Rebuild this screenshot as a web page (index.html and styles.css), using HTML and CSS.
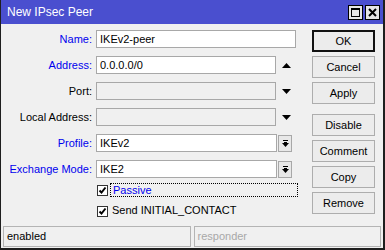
FILE: index.html
```html
<!DOCTYPE html>
<html lang="en">
<head>
  <meta charset="UTF-8" />
  <title>New IPsec Peer</title>
  <link rel="stylesheet" href="styles.css">
</head>
<body>
  <div class="window">
    <div class="titlebar">
      <span class="title">New IPsec Peer</span>
      <div class="win-btns">
        <span class="win-btn"><svg width="9" height="9" viewBox="0 0 9 9"><rect x="0.5" y="0.5" width="8" height="8" fill="none" stroke="#000"/><rect x="0" y="0" width="9" height="2" fill="#000"/></svg></span>
        <span class="win-btn"><svg width="9" height="9" viewBox="0 0 9 9"><path d="M1 1 L8 8 M8 1 L1 8" stroke="#000" stroke-width="2"/></svg></span>
      </div>
    </div>

    <div class="content">
      <div class="form">
        <div class="row">
          <label class="lbl blue">Name:</label>
          <div class="field full"><span class="input">IKEv2-peer</span></div>
        </div>
        <div class="row">
          <label class="lbl blue">Address:</label>
          <div class="field">
            <span class="input">0.0.0.0/0</span>
            <span class="arrow"><svg width="9" height="5" viewBox="0 0 9 5"><polygon points="0,5 9,5 4.5,0" fill="#000"/></svg></span>
          </div>
        </div>
        <div class="row">
          <label class="lbl">Port:</label>
          <div class="field">
            <span class="input disabled"></span>
            <span class="arrow"><svg width="9" height="5" viewBox="0 0 9 5"><polygon points="0,0 9,0 4.5,5" fill="#000"/></svg></span>
          </div>
        </div>
        <div class="row">
          <label class="lbl">Local Address:</label>
          <div class="field">
            <span class="input disabled"></span>
            <span class="arrow"><svg width="9" height="5" viewBox="0 0 9 5"><polygon points="0,0 9,0 4.5,5" fill="#000"/></svg></span>
          </div>
        </div>
        <div class="row">
          <label class="lbl blue">Profile:</label>
          <div class="field">
            <span class="input">IKEv2</span>
            <span class="drop"><svg width="7" height="7" viewBox="0 0 7 7"><rect x="1" y="0" width="5" height="1" fill="#000"/><polygon points="2,2 5,2 5,3 7,3 3.5,7 0,3 2,3" fill="#000"/></svg></span>
          </div>
        </div>
        <div class="row">
          <label class="lbl blue">Exchange Mode:</label>
          <div class="field">
            <span class="input">IKE2</span>
            <span class="drop"><svg width="7" height="7" viewBox="0 0 7 7"><rect x="1" y="0" width="5" height="1" fill="#000"/><polygon points="2,2 5,2 5,3 7,3 3.5,7 0,3 2,3" fill="#000"/></svg></span>
          </div>
        </div>

        <div class="check-row first">
          <span class="box"><svg width="9" height="9" viewBox="0 0 9 9"><path d="M1.5 4.5 L3.5 6.5 L7.5 1.5" fill="none" stroke="#000" stroke-width="2"/></svg></span>
          <span class="check-label focus blue">Passive</span>
        </div>
        <div class="check-row">
          <span class="box"><svg width="9" height="9" viewBox="0 0 9 9"><path d="M1.5 4.5 L3.5 6.5 L7.5 1.5" fill="none" stroke="#000" stroke-width="2"/></svg></span>
          <span class="check-label">Send INITIAL_CONTACT</span>
        </div>
      </div>

      <div class="buttons">
        <button class="btn default">OK</button>
        <button class="btn">Cancel</button>
        <button class="btn">Apply</button>
        <button class="btn spaced">Disable</button>
        <button class="btn">Comment</button>
        <button class="btn">Copy</button>
        <button class="btn">Remove</button>
      </div>
    </div>

    <div class="statusbar">
      <span class="status">enabled</span>
      <span class="status muted">responder</span>
    </div>
  </div>
</body>
</html>
```

FILE: styles.css
```css
body {
  margin: 0;
  font-family: "Liberation Sans", Arial, sans-serif;
  font-size: 11px;
  color: #000;
  background: #f0f0f0;
}
.window {
  width: 385px;
  height: 250px;
  box-sizing: border-box;
  border-left: 1px solid #1e1e1e;
  border-right: 2px solid #1e1e1e;
  border-bottom: 2px solid #1e1e1e;
  background: #f0f0f0;
  display: flex;
  flex-direction: column;
}
.titlebar {
  height: 24px;
  background: #4a4fcf;
  display: flex;
  align-items: center;
  justify-content: space-between;
  padding: 0 3px 0 6px;
}
.title {
  color: #fff;
  font-size: 12px;
}
.win-btns {
  display: flex;
  gap: 2px;
}
.win-btn {
  width: 13px;
  height: 13px;
  border: 1px solid #000;
  background: #e6e6e6;
  display: flex;
  align-items: center;
  justify-content: center;
}
.content {
  display: flex;
  padding-top: 6px;
  height: 195px;
}
.form {
  width: 311px;
  display: flex;
  flex-direction: column;
}
.row {
  display: flex;
  align-items: center;
  height: 18px;
  margin-bottom: 8px;
}
.lbl {
  width: 91px;
  text-align: right;
  padding-right: 4px;
}
.blue {
  color: #0000ee;
}
.field {
  display: flex;
  align-items: center;
  width: 200px;
}
.input {
  box-sizing: border-box;
  height: 18px;
  width: 181px;
  border: 1px solid #a8a8a8;
  background: #fff;
  padding: 1px 3px 0;
  line-height: 15px;
}
.field.full .input {
  width: 200px;
}
.input.disabled {
  background: #f0f0f0;
}
.arrow {
  width: 19px;
  display: flex;
  justify-content: center;
  padding-left: 1px;
}
.drop {
  box-sizing: border-box;
  width: 14px;
  height: 17px;
  margin-left: 1px;
  border: 1px solid #a8a8a8;
  background: #e8e8e8;
  display: flex;
  align-items: center;
  justify-content: center;
}
.check-row {
  display: flex;
  align-items: center;
  height: 14px;
  margin-left: 96px;
  margin-bottom: 7px;
}
.check-row.first {
  margin-top: -3px;
}
.box {
  box-sizing: border-box;
  width: 11px;
  height: 11px;
  border: 1px solid #333;
  background: #fff;
  display: flex;
  align-items: center;
  justify-content: center;
  margin-right: 2px;
}
.check-label {
  box-sizing: border-box;
  height: 14px;
  line-height: 12px;
  padding-left: 2px;
}
.check-label.focus {
  width: 188px;
  border: 1px dotted #000;
}
.buttons {
  display: flex;
  flex-direction: column;
  width: 63px;
}
.btn {
  box-sizing: border-box;
  height: 22px;
  margin-bottom: 4px;
  border: 1px solid #adadad;
  background: #ececec;
  font-family: "Liberation Sans", Arial, sans-serif;
  font-size: 11px;
  color: #000;
  padding: 0;
}
.btn.default {
  border: 2px solid #111;
}
.btn.spaced {
  margin-top: 6px;
}
.statusbar {
  display: flex;
  gap: 3px;
  padding: 0 2px 1px 2px;
  margin-top: auto;
}
.status {
  box-sizing: border-box;
  height: 21px;
  flex: 1;
  border: 1px solid #b4b4b4;
  padding-left: 3px;
  line-height: 19px;
}
.status.muted {
  color: #a8a8a8;
}
```
